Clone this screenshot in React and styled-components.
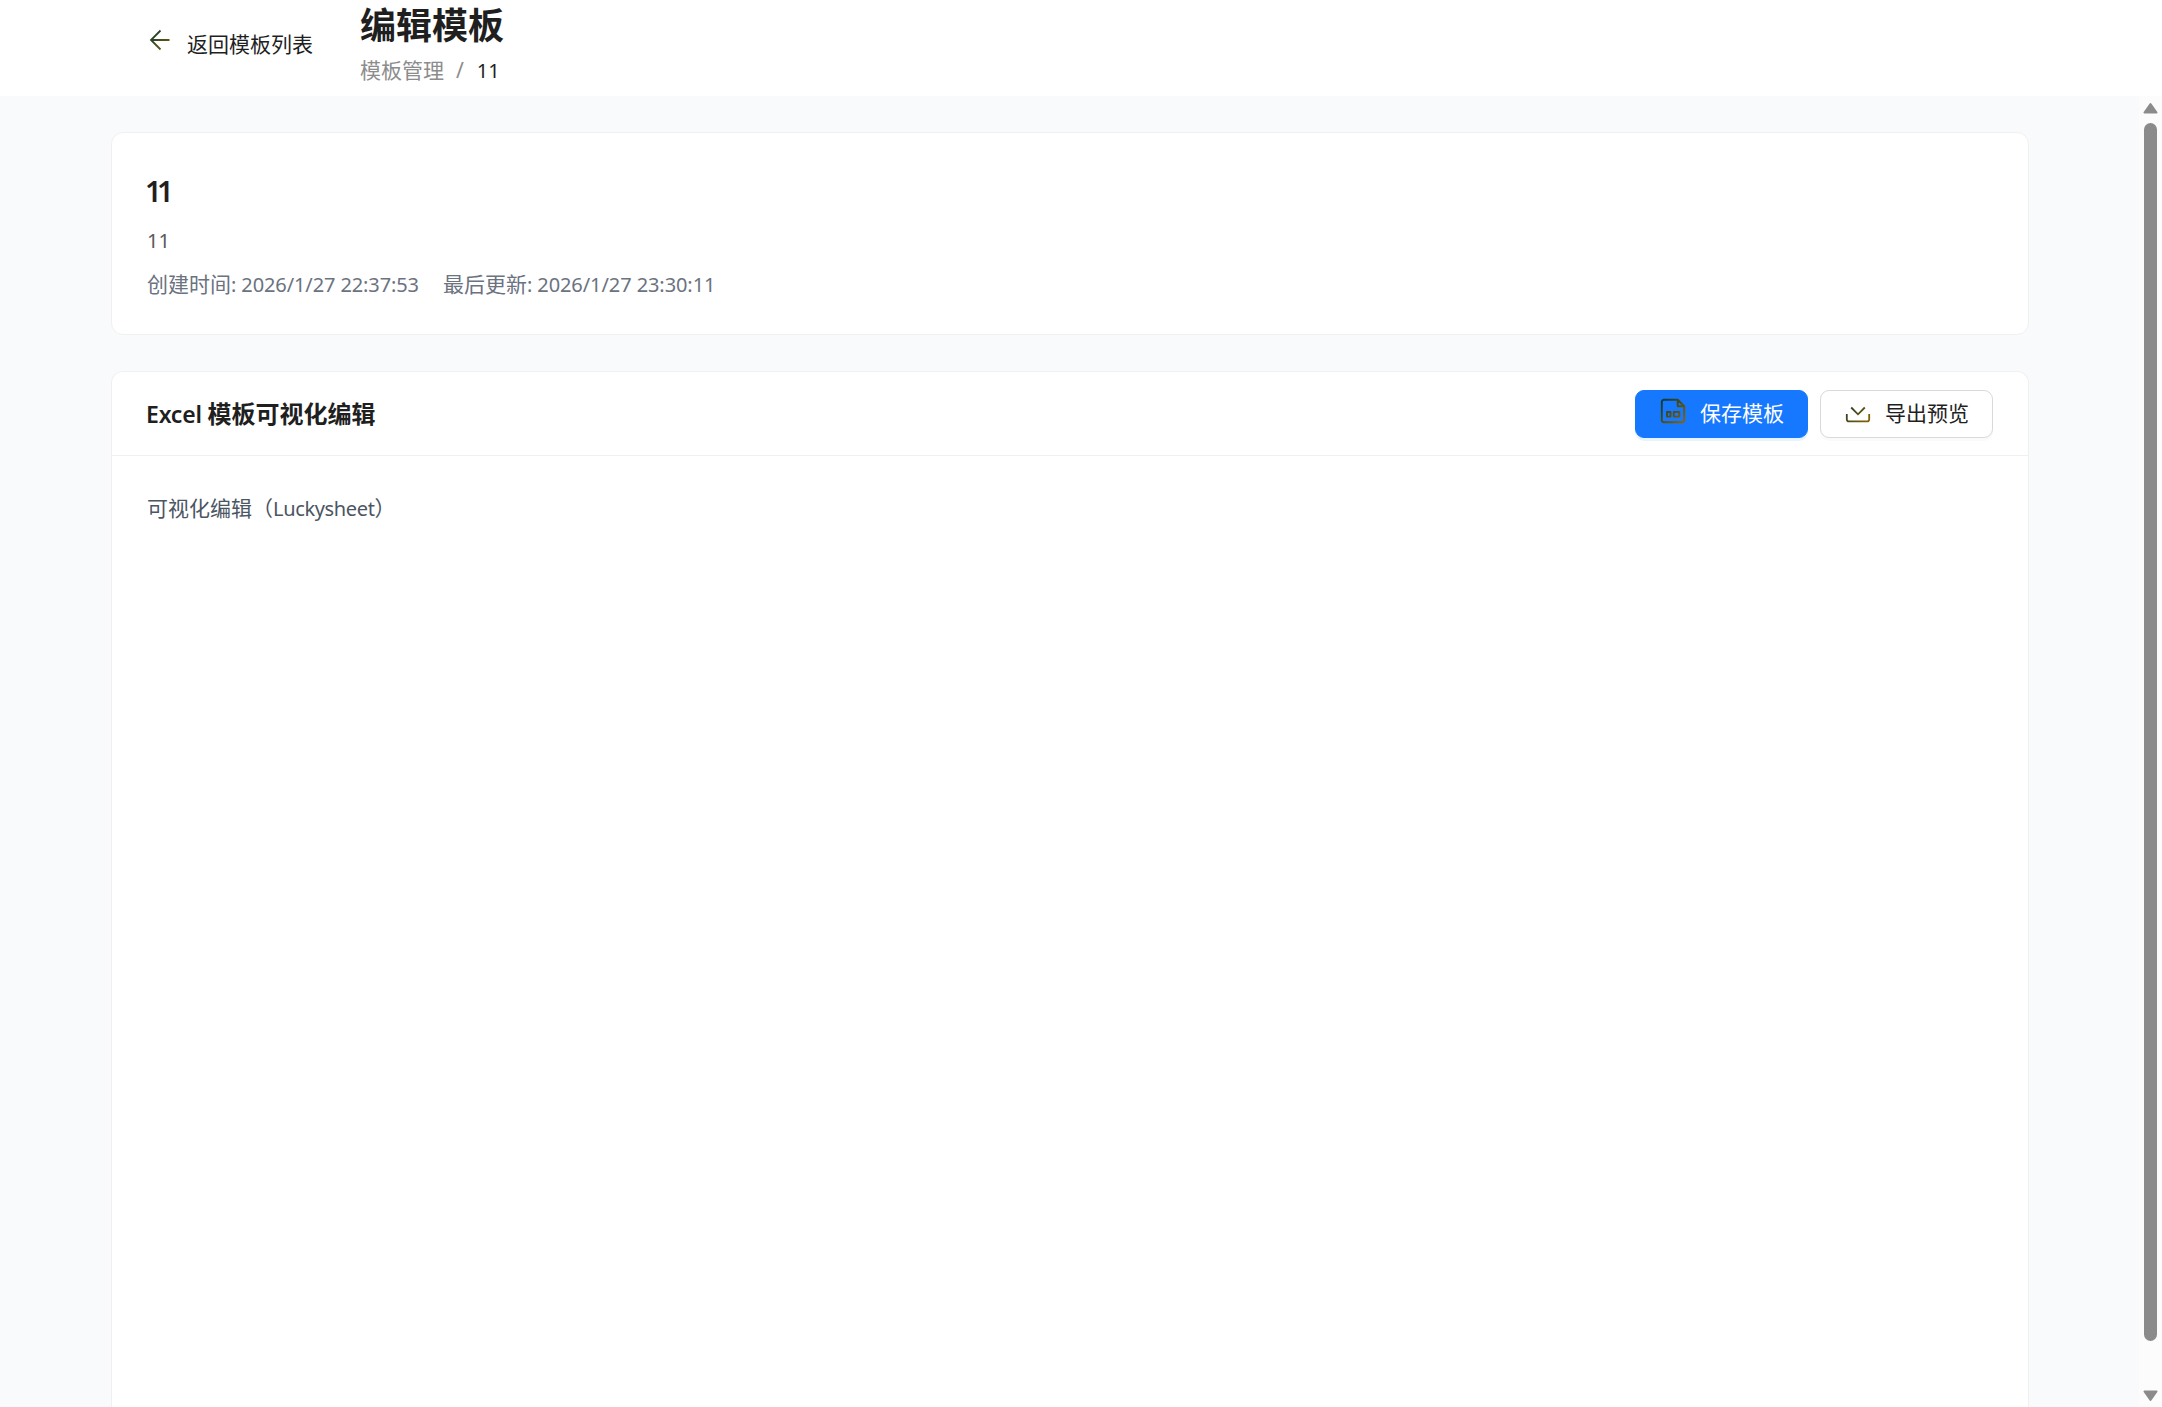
import React from 'react';
import styled, { createGlobalStyle } from 'styled-components';

const GlobalStyle = createGlobalStyle`
  * {
    box-sizing: border-box;
  }

  body {
    margin: 0;
    overflow: hidden;
    background: #f9fafc;
    color: #1f1f1f;
    font-family: 'Noto Sans', 'Noto Sans CJK SC', sans-serif;
    font-size: 21px;
    line-height: 33px;
  }
`;

const Page = styled.div`
  display: flex;
  flex-direction: column;
  height: 100vh;
  overflow: hidden;
`;

const Header = styled.header`
  display: flex;
  align-items: center;
  flex: none;
  height: 96px;
  padding-left: 148px;
  background: #fff;
`;

const BackButton = styled.button`
  display: flex;
  align-items: center;
  gap: 15px;
  width: 212px;
  padding: 0;
  border: 0;
  background: none;
  color: #1f1f1f;
  font: inherit;
  text-align: left;
  margin: -7px 0 0;

  svg {
    margin-top: -9px;
  }
`;

const Heading = styled.div`
  display: flex;
  flex-direction: column;
  gap: 4px;
  margin-top: -7px;
`;

const Title = styled.h1`
  margin: 0;
  font-size: 36px;
  font-weight: 700;
  line-height: 48px;
`;

const Breadcrumb = styled.nav`
  display: flex;
  gap: 12px;
  color: #8c8c8c;

  strong {
    margin-left: 1px;
    color: #1f1f1f;
    font-weight: 400;
  }
`;

const Body = styled.div`
  display: flex;
  flex: 1;
  min-height: 0;
`;

const Content = styled.main`
  display: flex;
  flex: 1;
  flex-direction: column;
  gap: 36px;
  padding: 36px 110px 0 111px;
  overflow: hidden;
`;

const Card = styled.section`
  flex: ${props => (props.$fill ? '1' : 'none')};
  border: 1px solid #f0f0f0;
  border-bottom-width: ${props => (props.$fill ? '0' : '1px')};
  border-radius: ${props => (props.$fill ? '12px 12px 0 0' : '12px')};
  background: #fff;
`;

const InfoBody = styled.div`
  height: 201px;
  padding: 35px 35px 36px;
`;

const TemplateName = styled.h2`
  margin: 0 0 0 -2px;
  font-size: 29px;
  font-weight: 600;
  line-height: 45px;
  letter-spacing: -4.5px;
`;

const Description = styled.p`
  margin: 11px 0 11px;
  color: #595959;
  line-height: 33px;
`;

const Meta = styled.div`
  display: flex;
  gap: 24px;
  color: #6b7280;
`;

const Latin = styled.span`
  font-size: ${props => (props.$large ? '23px' : '20px')};
  letter-spacing: ${props => props.$spacing || '0'};
`;

const CardHeader = styled.div`
  display: flex;
  align-items: center;
  justify-content: space-between;
  height: 84px;
  padding: 0 35px;
  border-bottom: 1px solid #f0f0f0;
`;

const CardTitle = styled.h3`
  margin: 0 0 0 -1px;
  font-size: 24px;
  font-weight: 600;
`;

const Actions = styled.div`
  display: flex;
  gap: 12px;
`;

const Button = styled.button`
  display: flex;
  align-items: center;
  gap: 14px;
  width: 173px;
  height: 48px;
  padding: 0 0 1px 24px;
  border: 1px solid ${props => (props.$primary ? '#1677ff' : '#d9d9d9')};
  border-radius: 9px;
  background: ${props => (props.$primary ? '#1677ff' : '#fff')};
  box-shadow: 0 3px 0 ${props => (props.$primary ? 'rgba(5, 145, 255, 0.1)' : 'rgba(0, 0, 0, 0.02)')};
  color: ${props => (props.$primary ? '#fff' : '#1f1f1f')};
  font: inherit;
  white-space: nowrap;

  svg {
    flex: none;
    margin-top: -4px;
  }
`;

const EditorBody = styled.div`
  padding: 36px 35px;
  color: #4b5563;
`;

const Scrollbar = styled.div`
  display: flex;
  flex: none;
  flex-direction: column;
  align-items: center;
  width: 23px;
  padding: 6px 0 5px;
  background: #fcfcfc;
`;

const Thumb = styled.div`
  width: 13px;
  height: 1218px;
  margin-top: 9px;
  margin-bottom: auto;
  border-radius: 7px;
  background: #8b8b8b;
`;

const IconGradient = ({ id }) => (
  <defs>
    <linearGradient id={id} x1="0" y1="0" x2="24" y2="24" gradientUnits="userSpaceOnUse">
      <stop offset="0" stopColor="#00363a" />
      <stop offset="1" stopColor="#8a6200" />
    </linearGradient>
  </defs>
);

const BackIcon = () => (
  <svg width="24" height="24" viewBox="0 0 24 24" fill="none" stroke="url(#back)" strokeWidth="1.8">
    <IconGradient id="back" />
    <path d="M21.5 12H3M12.5 2.5L3 12l9.5 9.5" />
  </svg>
);

const SaveIcon = () => (
  <svg width="26" height="26" viewBox="0 0 26 26" fill="none" stroke="url(#save)" strokeWidth="1.9" strokeLinejoin="round">
    <IconGradient id="save" />
    <path d="M17.7 1.8H4A2.2 2.2 0 0 0 1.8 4v18A2.2 2.2 0 0 0 4 24.2h18a2.2 2.2 0 0 0 2.2-2.2V8.2zV8.2h6.5M7 14h3.5v4.6H7zM13.8 14h5.5v4.6h-5.5z" />
  </svg>
);

const ExportIcon = () => (
  <svg width="26" height="26" viewBox="0 0 26 26" fill="none" stroke="url(#export)" strokeWidth="1.8">
    <IconGradient id="export" />
    <path d="M6.2 9.5L13 16.3L19.8 9.5M1.8 16v5.2a2.2 2.2 0 0 0 2.2 2.2h18a2.2 2.2 0 0 0 2.2-2.2V16" />
  </svg>
);

const ScrollArrow = ({ down }) => (
  <svg width="15" height="12" viewBox="0 0 15 12" fill="#8b8b8b" stroke="#8b8b8b" strokeWidth="2" strokeLinejoin="round">
    <path d={down ? 'M1.5 1.5h12L7.5 10z' : 'M1.5 10.5h12L7.5 2z'} />
  </svg>
);

const App = () => (
  <Page>
    <GlobalStyle />
    <Header>
      <BackButton>
        <BackIcon />
        返回模板列表
      </BackButton>
      <Heading>
        <Title>编辑模板</Title>
        <Breadcrumb>
          <span>模板管理</span>
          <span>/</span>
          <strong><Latin>11</Latin></strong>
        </Breadcrumb>
      </Heading>
    </Header>
    <Body>
      <Content>
        <Card>
          <InfoBody>
            <TemplateName>11</TemplateName>
            <Description><Latin>11</Latin></Description>
            <Meta>
              <span>创建时间<Latin $spacing="-0.11px">: 2026/1/27 22:37:53</Latin></span>
              <span>最后更新<Latin $spacing="-0.08px">: 2026/1/27 23:30:11</Latin></span>
            </Meta>
          </InfoBody>
        </Card>
        <Card $fill>
          <CardHeader>
            <CardTitle><Latin $large $spacing="-0.2px">Excel </Latin>模板可视化编辑</CardTitle>
            <Actions>
              <Button $primary>
                <SaveIcon />
                保存模板
              </Button>
              <Button>
                <ExportIcon />
                导出预览
              </Button>
            </Actions>
          </CardHeader>
          <EditorBody>可视化编辑（<Latin $spacing="-0.35px">Luckysheet</Latin>）</EditorBody>
        </Card>
      </Content>
      <Scrollbar>
        <ScrollArrow />
        <Thumb />
        <ScrollArrow down />
      </Scrollbar>
    </Body>
  </Page>
);

export default App;
